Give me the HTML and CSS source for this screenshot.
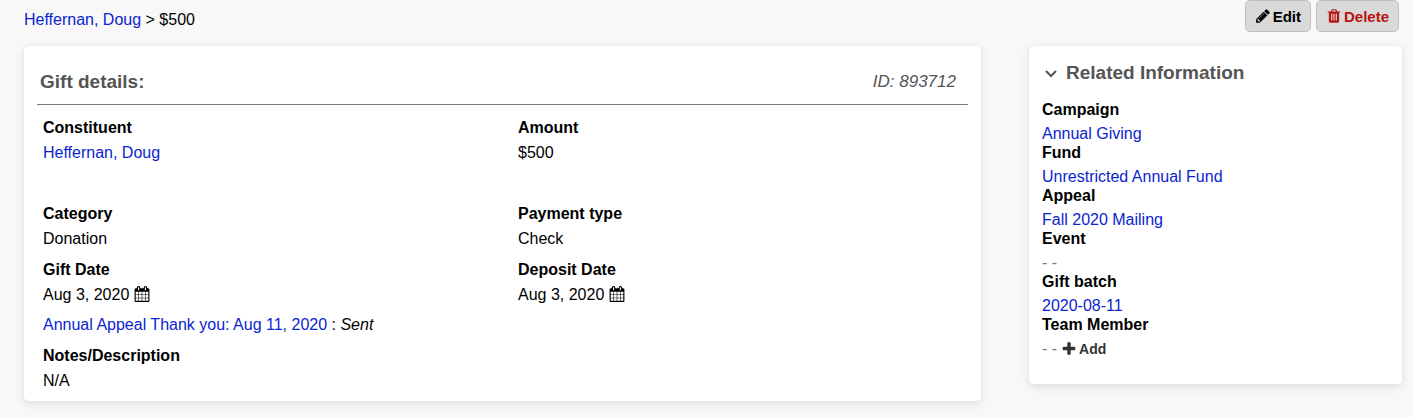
FILE: index.html
```html
<!DOCTYPE html>
<html lang="en">
<head>
  <meta charset="UTF-8">
  <meta name="viewport" content="width=device-width, initial-scale=1.0">
  <title>Gift: Heffernan, Doug</title>
  <link rel="stylesheet" href="styles.css">
</head>
<body>
  <!-- Shared icon shapes -->
  <svg class="icon-defs" aria-hidden="true">
    <symbol id="icon-calendar" viewBox="0 0 1792 1792">
      <path d="M192 1664h288v-288h-288v288zm352 0h320v-288h-320v288zm-352-352h288v-320h-288v320zm352 0h320v-320h-320v320zm-352-384h288v-288h-288v288zm736 736h320v-288h-320v288zm-384-736h320v-288h-320v288zm768 736h288v-288h-288v288zm-384-352h320v-320h-320v320zm-352-864v-288q0-13-9.5-22.5t-22.5-9.5h-64q-13 0-22.5 9.5t-9.5 22.5v288q0 13 9.5 22.5t22.5 9.5h64q13 0 22.5-9.5t9.5-22.5zm736 864h288v-320h-288v320zm-384-384h320v-288h-320v288zm384 0h288v-288h-288v288zm32-480v-288q0-13-9.5-22.5t-22.5-9.5h-64q-13 0-22.5 9.5t-9.5 22.5v288q0 13 9.5 22.5t22.5 9.5h64q13 0 22.5-9.5t9.5-22.5zm384-64v1280q0 52-38 90t-90 38h-1408q-52 0-90-38t-38-90v-1280q0-52 38-90t90-38h128v-96q0-66 47-113t113-47h64q66 0 113 47t47 113v96h384v-96q0-66 47-113t113-47h64q66 0 113 47t47 113v96h128q52 0 90 38t38 90z"/>
    </symbol>
  </svg>

  <header class="top-bar">
    <nav class="breadcrumb"><a href="#">Heffernan, Doug</a> &gt; $500</nav>
    <div class="actions">
      <button type="button" class="btn">
        <svg class="icon" viewBox="0 0 1792 1792" aria-hidden="true"><path d="M491 1536l91-91-235-235-91 91v107h128v128h107zm523-928q0-22-22-22-10 0-17 7l-542 542q-7 7-7 17 0 22 22 22 10 0 17-7l542-542q7-7 7-17zm-54-192l416 416-832 832h-416v-416zm683 96q0 53-37 90l-166 166-416-416 166-165q36-38 90-38 53 0 91 38l235 234q37 39 37 91z"/></svg>
        Edit
      </button>
      <button type="button" class="btn btn-delete">
        <svg class="icon" viewBox="0 0 1792 1792" aria-hidden="true"><path d="M704 1376v-704q0-14-9-23t-23-9h-64q-14 0-23 9t-9 23v704q0 14 9 23t23 9h64q14 0 23-9t9-23zm256 0v-704q0-14-9-23t-23-9h-64q-14 0-23 9t-9 23v704q0 14 9 23t23 9h64q14 0 23-9t9-23zm256 0v-704q0-14-9-23t-23-9h-64q-14 0-23 9t-9 23v704q0 14 9 23t23 9h64q14 0 23-9t9-23zm-544-992h448l-48-117q-7-9-17-11h-317q-10 2-17 11zm928 32v64q0 14-9 23t-23 9h-96v948q0 83-47 143.5t-113 60.5h-832q-66 0-113-58.5t-47-141.5v-952h-96q-14 0-23-9t-9-23v-64q0-14 9-23t23-9h309l70-167q15-37 54-63t79-26h320q40 0 79 26t54 63l70 167h309q14 0 23 9t9 23z"/></svg>
        Delete
      </button>
    </div>
  </header>

  <div class="layout">
    <main class="card gift">
      <div class="gift-header">
        <h2>Gift details:</h2>
        <em class="gift-id">ID: 893712</em>
      </div>
      <dl class="fields">
        <div class="field field-tall">
          <dt>Constituent</dt>
          <dd><a href="#">Heffernan, Doug</a></dd>
        </div>
        <div class="field field-tall">
          <dt>Amount</dt>
          <dd>$500</dd>
        </div>
        <div class="field">
          <dt>Category</dt>
          <dd>Donation</dd>
        </div>
        <div class="field">
          <dt>Payment type</dt>
          <dd>Check</dd>
        </div>
        <div class="field">
          <dt>Gift Date</dt>
          <dd>Aug 3, 2020 <svg class="icon icon-date" aria-hidden="true"><use href="#icon-calendar"/></svg></dd>
        </div>
        <div class="field">
          <dt>Deposit Date</dt>
          <dd>Aug 3, 2020 <svg class="icon icon-date" aria-hidden="true"><use href="#icon-calendar"/></svg></dd>
        </div>
      </dl>
      <p class="letter"><a href="#">Annual Appeal Thank you: Aug 11, 2020</a> : <em>Sent</em></p>
      <dl class="fields">
        <div class="field">
          <dt>Notes/Description</dt>
          <dd>N/A</dd>
        </div>
      </dl>
    </main>

    <aside class="card related">
      <h2>
        <svg class="chevron" viewBox="0 0 14 14" aria-hidden="true"><path d="M2 5L7 10L12 5"/></svg>
        Related Information
      </h2>
      <dl>
        <dt>Campaign</dt>
        <dd><a href="#">Annual Giving</a></dd>
        <dt>Fund</dt>
        <dd><a href="#">Unrestricted Annual Fund</a></dd>
        <dt>Appeal</dt>
        <dd><a href="#">Fall 2020 Mailing</a></dd>
        <dt>Event</dt>
        <dd class="empty">- -</dd>
        <dt>Gift batch</dt>
        <dd><a href="#">2020-08-11</a></dd>
        <dt>Team Member</dt>
        <dd class="empty">- -
          <button type="button" class="btn-add">
            <svg class="icon" viewBox="0 0 1792 1792" aria-hidden="true"><path d="M1600 736v192q0 40-28 68t-68 28h-416v416q0 40-28 68t-68 28h-192q-40 0-68-28t-28-68v-416h-416q-40 0-68-28t-28-68v-192q0-40 28-68t68-28h416v-416q0-40 28-68t68-28h192q40 0 68 28t28 68v416h416q40 0 68 28t28 68z"/></svg>
            Add
          </button>
        </dd>
      </dl>
    </aside>
  </div>
</body>
</html>
```

FILE: styles.css
```css
* {
  box-sizing: border-box;
}
body {
  margin: 0;
  font-family: Helvetica, "Liberation Sans", Arial, sans-serif;
  font-size: 16px;
  line-height: 24px;
  color: #000;
  background-color: #f8f8f8;
}
a {
  color: #0b24d0;
  text-decoration: none;
}
a:hover {
  text-decoration: underline;
}
h2 {
  margin: 0;
  font-size: 19px;
  line-height: 24px;
  color: #555;
}
dl, dd, p {
  margin: 0;
}
dt {
  font-weight: bold;
}
.icon-defs {
  display: none;
}
.icon {
  width: 16px;
  height: 16px;
  fill: currentColor;
}

/* Top bar */
.top-bar {
  display: flex;
  justify-content: space-between;
  padding: 0 14px 0 24px;
}
.breadcrumb {
  padding-top: 8px;
}
.actions {
  display: flex;
  gap: 5px;
}
.btn {
  display: flex;
  align-items: center;
  gap: 2px;
  height: 32px;
  padding: 0 9px;
  border: 1px solid #bfbfbf;
  border-radius: 5px;
  background-color: #d9d9d9;
  color: #000;
  font-family: inherit;
  font-size: 15px;
  font-weight: bold;
  cursor: pointer;
}
.btn-delete {
  color: #b81414;
}

/* Cards */
.layout {
  display: grid;
  grid-template-columns: 957fr 373fr;
  align-items: start;
  gap: 48px;
  padding: 14px 11px 15px 24px;
}
.card {
  min-width: 0;
  background-color: #fff;
  border-radius: 4px;
  box-shadow: 0 0 1px #c8cbe8, 0 3px 10px rgba(0, 0, 0, 0.1);
}
.gift {
  padding: 12px 13px 8px;
}
.related {
  padding: 15px 13px 25px;
}

/* Gift details */
.gift-header {
  display: flex;
  justify-content: space-between;
  padding: 12px 12px 10px 3px;
  margin-bottom: 11px;
  border-bottom: 1px solid #777;
}
.gift-id {
  font-size: 17px;
  color: #555;
}
.fields {
  display: grid;
  grid-template-columns: 19fr 18fr;
  row-gap: 7px;
  padding-left: 6px;
}
.field dd {
  line-height: 25px;
}
.field-tall {
  padding-bottom: 30px;
}
.icon-date {
  vertical-align: -2px;
}
.letter {
  padding: 6px 0 7px 6px;
}

/* Related information */
.related h2 {
  display: flex;
  align-items: center;
  gap: 8px;
  margin-bottom: 16px;
  padding-left: 2px;
}
.chevron {
  width: 14px;
  height: 14px;
  fill: none;
  stroke: #555;
  stroke-width: 2;
}
.related dt {
  margin-bottom: 5px;
  line-height: 18px;
}
.related dd {
  line-height: 20px;
}
.related .empty {
  display: flex;
  gap: 4px;
  color: #777;
}
.btn-add {
  display: flex;
  align-items: center;
  gap: 2px;
  padding: 0;
  border: 0;
  background: none;
  color: #333;
  font-family: inherit;
  font-size: 14px;
  font-weight: bold;
  cursor: pointer;
}
```
